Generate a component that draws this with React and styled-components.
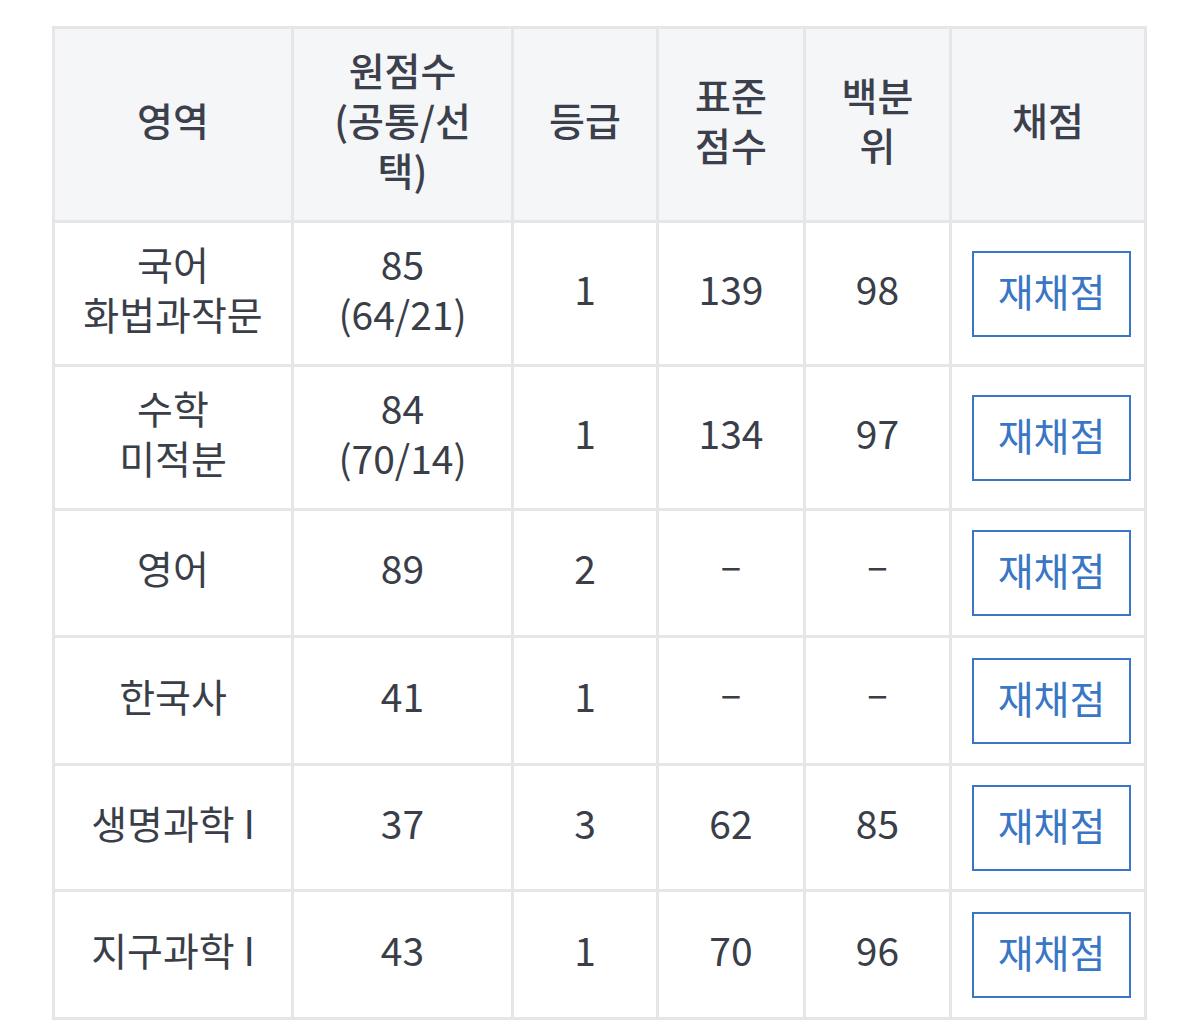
import styled, { createGlobalStyle } from "styled-components";

const GlobalStyle = createGlobalStyle`
  body {
    margin: 0;
    background: #fff;
    font-family: "Noto Sans CJK KR", "Noto Sans", sans-serif;
  }
`;

const Page = styled.div`
  padding: 26px 0 0 52px;
`;

const ScoreGrid = styled.div`
  display: grid;
  grid-template-columns: 236px 217px 142px 144px 143px 192px;
  grid-template-rows: 191px 141px 141px 124px 125px 123px 125px;
  gap: 3px;
  padding: 3px;
  width: 1089px;
  background: #e6e6e9;
`;

const Cell = styled.div`
  display: flex;
  align-items: center;
  justify-content: center;
  text-align: center;
  padding-bottom: ${(p) => (p.$btn ? 0 : 12)}px;
  background: ${(p) => (p.$head ? "#f5f6f8" : "#fff")};
  color: ${(p) => (p.$head ? "#3b404c" : "#3a3e48")};
  font-size: 39px;
  line-height: 50px;
  font-weight: ${(p) => (p.$head ? 500 : 400)};
`;

const Dash = styled.span`
  display: inline-block;
  transform: translateY(-4px);
`;

const RescoreBtn = styled.button`
  margin-left: 7px;
  width: 159px;
  height: 86px;
  border: 2px solid #3a76c6;
  background: #fff;
  color: #3a76c6;
  font-family: "Noto Sans CJK KR", "Noto Sans", sans-serif;
  font-size: 39px;
  line-height: 50px;
  padding: 0 0 8px;
  cursor: pointer;
`;

const headers = [
  ["영역"],
  ["원점수", "(공통/선", "택)"],
  ["등급"],
  ["표준", "점수"],
  ["백분", "위"],
  ["채점"],
];

const rows = [
  { area: ["국어", "화법과작문"], raw: ["85", "(64/21)"], grade: "1", std: "139", pct: "98" },
  { area: ["수학", "미적분"], raw: ["84", "(70/14)"], grade: "1", std: "134", pct: "97" },
  { area: ["영어"], raw: ["89"], grade: "2", std: "–", pct: "–" },
  { area: ["한국사"], raw: ["41"], grade: "1", std: "–", pct: "–" },
  { area: ["생명과학 I"], raw: ["37"], grade: "3", std: "62", pct: "85" },
  { area: ["지구과학 I"], raw: ["43"], grade: "1", std: "70", pct: "96" },
];

const Lines = ({ items }) => (
  <div>
    {items.map((t, i) => (
      <div key={i}>{t}</div>
    ))}
  </div>
);

const Value = ({ v }) => (v === "–" ? <Dash>{v}</Dash> : v);

export default function App() {
  return (
    <>
      <GlobalStyle />
      <Page>
        <ScoreGrid>
          {headers.map((h, i) => (
            <Cell $head key={"h" + i}>
              <Lines items={h} />
            </Cell>
          ))}
          {rows.map((r, i) => [
            <Cell key={"a" + i}>
              <Lines items={r.area} />
            </Cell>,
            <Cell key={"r" + i}>
              <Lines items={r.raw} />
            </Cell>,
            <Cell key={"g" + i}>{r.grade}</Cell>,
            <Cell key={"s" + i}>
              <Value v={r.std} />
            </Cell>,
            <Cell key={"p" + i}>
              <Value v={r.pct} />
            </Cell>,
            <Cell $btn key={"b" + i}>
              <RescoreBtn>재채점</RescoreBtn>
            </Cell>,
          ])}
        </ScoreGrid>
      </Page>
    </>
  );
}
